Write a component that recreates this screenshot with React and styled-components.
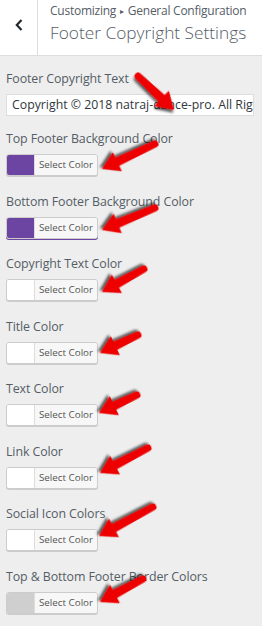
import React from "react";
import styled, { createGlobalStyle } from "styled-components";

const Global = createGlobalStyle`
  html, body { margin: 0; padding: 0; }
  body {
    background: #eeeeee;
    font-family: "Open Sans", "Noto Sans", "Liberation Sans", sans-serif;
    width: 262px;
    height: 626px;
    overflow: hidden;
  }
`;

const Page = styled.div`
  position: relative;
  width: 262px;
  height: 626px;
  background: #eeeeee;
  overflow: hidden;
`;

const Header = styled.header`
  display: flex;
  height: 55px;
  background: #ffffff;
  border-bottom: 1px solid #dddddd;
`;

const BackButton = styled.button`
  display: flex;
  align-items: center;
  justify-content: center;
  width: 38px;
  height: 100%;
  padding: 0 0 6px 0;
  border: none;
  border-right: 1px solid #dddddd;
  background: #ffffff;
  color: #23282d;
`;

const HeaderText = styled.div`
  display: flex;
  flex-direction: column;
  padding: 2px 0 0 12px;
  white-space: nowrap;
`;

const Crumb = styled.span`
  font-size: 12px;
  line-height: 17px;
  color: #555d66;
  letter-spacing: -0.25px;
`;

const Arrowhead = styled.span`
  font-size: 8px;
  margin: 0 4px;
  vertical-align: 1px;
`;

const Title = styled.h1`
  margin: 0;
  font-size: 17.3px;
  font-weight: 300;
  line-height: 28px;
  color: #555d66;
  letter-spacing: 0;
`;

const Body = styled.main`
  padding: 13px 0 0 6px;
`;

const Control = styled.section`
  margin-bottom: ${(p) => p.$gap || "15.5px"};
`;

const Label = styled.div`
  font-size: 12.4px;
  font-weight: 500;
  line-height: 20px;
  color: #555d66;
  margin-bottom: 5px;
  white-space: nowrap;
  letter-spacing: -0.1px;
`;

const TextInput = styled.div`
  box-sizing: border-box;
  width: 248px;
  height: 22px;
  padding: 0 0 0 5px;
  background: #ffffff;
  border: 1px solid #dddddd;
  font-size: 12.3px;
  line-height: 20px;
  color: #32373c;
  white-space: nowrap;
  overflow: hidden;
`;

const ColorButton = styled.div`
  box-sizing: border-box;
  display: flex;
  width: 92px;
  height: 22px;
  border: 1px solid #cccccc;
  border-radius: 3px;
  overflow: hidden;
  background: #f7f7f7;
  box-shadow: 0 1px 0 ${(p) => p.$line || "#cccccc"};
`;

const Swatch = styled.span`
  width: 27px;
  background: ${(p) => p.$color};
  border-right: 1px solid #dddddd;
`;

const ColorText = styled.span`
  flex: 1;
  text-align: center;
  font-size: 9.8px;
  line-height: 20px;
  color: #555555;
  background: #f7f7f7;
`;

const Overlay = styled.svg`
  position: absolute;
  left: 0;
  top: 0;
  pointer-events: none;
`;

const fields = [
  { label: "Top Footer Background Color", color: "#6b45a1" },
  { label: "Bottom Footer Background Color", color: "#6b45a1", line: "#6b45a1" },
  { label: "Copyright Text Color", color: "#ffffff" },
  { label: "Title Color", color: "#ffffff" },
  { label: "Text Color", color: "#ffffff" },
  { label: "Link Color", color: "#ffffff" },
  { label: "Social Icon Colors", color: "#ffffff" },
  { label: "Top & Bottom Footer Border Colors", color: "#cfcfcf" },
];

const arrows = [
  [138, 76, 174, 110],
  [155, 144, 102, 169],
  [155, 208, 102, 230],
  [144, 269, 102, 292],
  [138, 335, 100, 353],
  [137, 395, 99, 413],
  [148, 448, 100, 473],
  [153, 507, 99, 536],
  [143, 579, 100, 602],
];

function Arrow({ x1, y1, x2, y2 }) {
  const dx = x2 - x1;
  const dy = y2 - y1;
  const L = Math.hypot(dx, dy);
  const ang = (Math.atan2(dy, dx) * 180) / Math.PI;
  const h = 17;
  const d = `M0,-3.4 L${L - h},-4.4 L${L - h},-10.5 L${L},0 L${L - h},10.5 L${L - h},4.4 L0,3.4 A3.4,3.4 0 0 1 0,-3.4 Z`;
  return (
    <g transform={`translate(${x1} ${y1}) rotate(${ang})`}>
      <path d={d} fill="#ee0000" filter="url(#sh)" />
    </g>
  );
}

export default function App() {
  return (
    <>
      <Global />
      <Page>
        <Header>
          <BackButton aria-label="Back">
            <svg width="10" height="14" viewBox="0 0 10 14">
              <path d="M7.5 2 L2.8 7 L7.5 12" fill="none" stroke="#23282d" strokeWidth="2.2" />
            </svg>
          </BackButton>
          <HeaderText>
            <Crumb>
              Customizing<Arrowhead>▸</Arrowhead>General Configuration
            </Crumb>
            <Title>Footer Copyright Settings</Title>
          </HeaderText>
        </Header>
        <Body>
          <Control $gap="13px">
            <Label>Footer Copyright Text</Label>
            <TextInput>Copyright © 2018 natraj-dance-pro. All Rights Reserved.</TextInput>
          </Control>
          {fields.map((f) => (
            <Control key={f.label}>
              <Label>{f.label}</Label>
              <ColorButton $line={f.line}>
                <Swatch $color={f.color} />
                <ColorText>Select Color</ColorText>
              </ColorButton>
            </Control>
          ))}
        </Body>
        <Overlay width="262" height="626" viewBox="0 0 262 626">
          <defs>
            <filter id="sh" x="-20%" y="-50%" width="150%" height="200%">
              <feDropShadow dx="1.5" dy="2.5" stdDeviation="1.3" floodColor="#000" floodOpacity="0.65" />
            </filter>
          </defs>
          {arrows.map(([a, b, c, d], i) => (
            <Arrow key={i} x1={a} y1={b} x2={c} y2={d} />
          ))}
        </Overlay>
      </Page>
    </>
  );
}
